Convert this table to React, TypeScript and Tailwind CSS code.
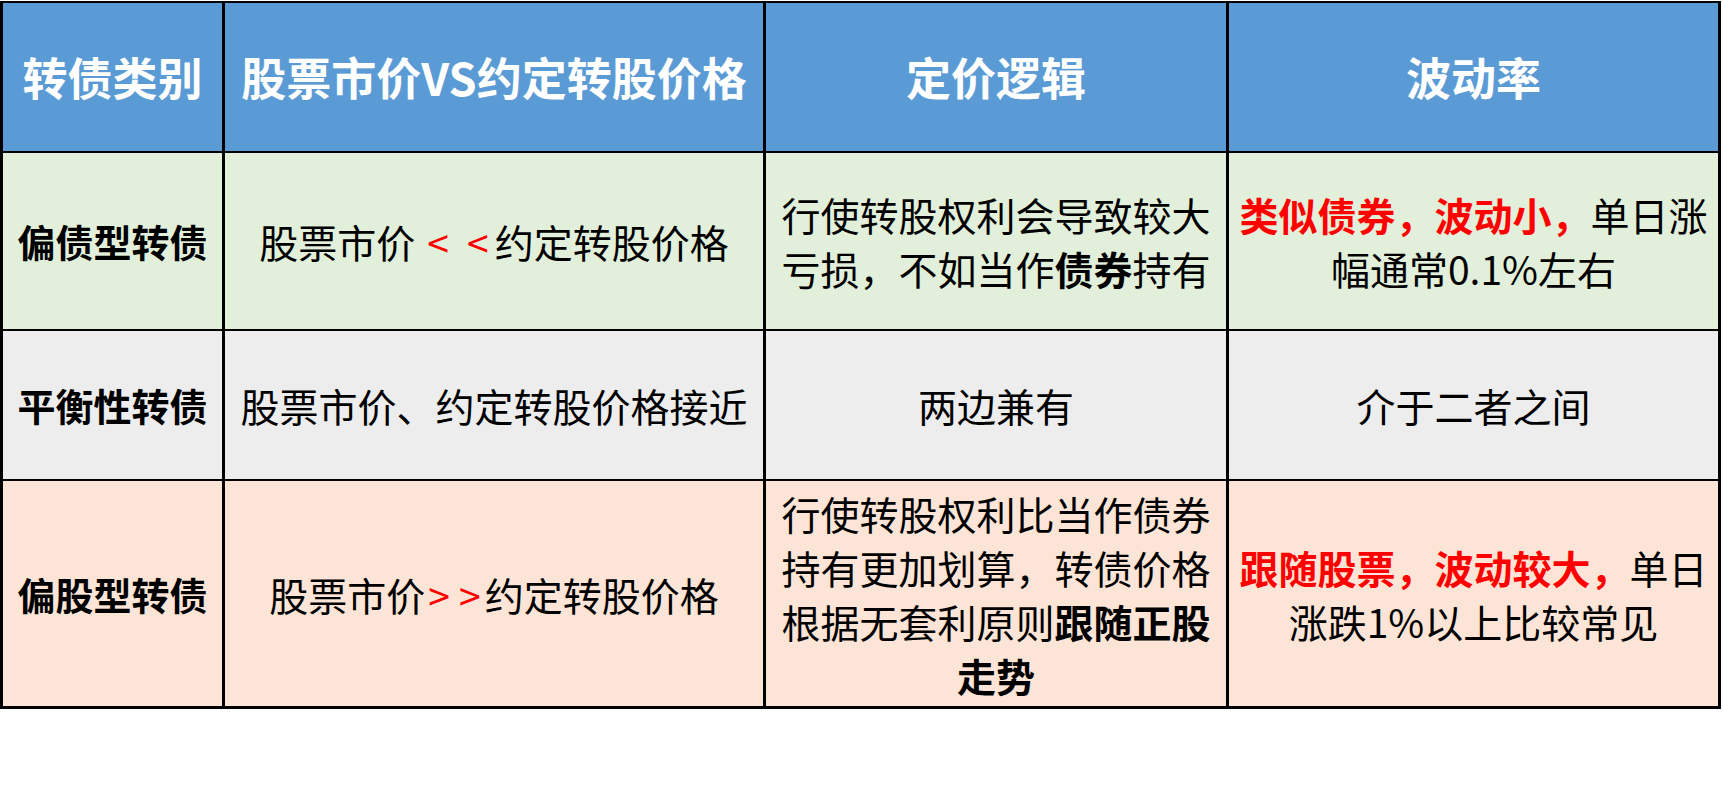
import React from 'react';

const Red: React.FC<{ children: React.ReactNode }> = ({ children }) => (
  <span className="font-bold text-[#ff0000]">{children}</span>
);

const Head: React.FC<{ children: React.ReactNode }> = ({ children }) => (
  <div className="flex items-center justify-center bg-[#5b9bd5] text-[45px] font-bold leading-[54px] text-white">
    {children}
  </div>
);

const Cell: React.FC<{ bg: string; className?: string; children: React.ReactNode }> = ({
  bg,
  className = '',
  children,
}) => (
  <div className={`flex items-center justify-center text-center ${bg} ${className}`}>
    <div>{children}</div>
  </div>
);

const App: React.FC = () => {
  const green = 'bg-[#e2efda]';
  const gray = 'bg-[#ededed]';
  const peach = 'bg-[#fce4d6]';

  return (
    <div className="h-[799px] w-[1723px] bg-white pt-px font-['Noto_Sans_CJK_SC','Noto_Sans',sans-serif] text-[39px] leading-[54px] text-black">
      <div className="grid w-[1721px] grid-cols-[219px_538px_460px_489px] grid-rows-[148px_176px_148px_225px] gap-x-[3px] gap-y-[2px] bg-black px-[3px] pb-[3px] pt-[2px]">
        <Head>转债类别</Head>
        <Head>股票市价VS约定转股价格</Head>
        <Head>定价逻辑</Head>
        <Head>波动率</Head>

        <Cell bg={green} className="text-[38px] font-bold">偏债型转债</Cell>
        <Cell bg={green}>
          股票市价
          <span className="ml-[12px] inline-block text-[#ff0000]">&lt;</span>
          <span className="ml-[18px] mr-[6px] inline-block text-[#ff0000]">&lt;</span>
          约定转股价格
        </Cell>
        <Cell bg={green} className="px-3">
          行使转股权利会导致较大亏损，不如当作<b>债券</b>持有
        </Cell>
        <Cell bg={green} className="px-2">
          <Red>类似债券，波动小，</Red>单日涨幅通常0.1%左右
        </Cell>

        <Cell bg={gray} className="text-[38px] font-bold">平衡性转债</Cell>
        <Cell bg={gray}>股票市价、约定转股价格接近</Cell>
        <Cell bg={gray}>两边兼有</Cell>
        <Cell bg={gray}>介于二者之间</Cell>

        <Cell bg={peach} className="text-[38px] font-bold">偏股型转债</Cell>
        <Cell bg={peach}>
          股票市价
          <span className="ml-[3px] inline-block text-[#ff0000]">&gt;</span>
          <span className="ml-[9px] mr-[4px] inline-block text-[#ff0000]">&gt;</span>
          约定转股价格
        </Cell>
        <Cell bg={peach} className="px-3">
          行使转股权利比当作债券持有更加划算，转债价格根据无套利原则<b>跟随正股走势</b>
        </Cell>
        <Cell bg={peach} className="px-2">
          <Red>跟随股票，波动较大，</Red>单日涨跌1%以上比较常见
        </Cell>
      </div>
    </div>
  );
};

export default App;
